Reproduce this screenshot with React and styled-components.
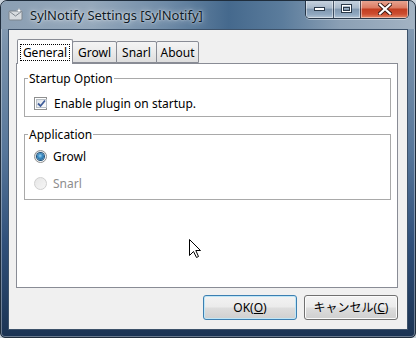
import React from 'react';
import styled, { createGlobalStyle } from 'styled-components';

const UI_FONT = `"Noto Sans", "Noto Sans CJK JP", sans-serif`;

const Global = createGlobalStyle`
  html, body { margin: 0; padding: 0; background: #c9d2db; overflow: hidden; }
  *, *::before, *::after { box-sizing: border-box; }
`;

const Window = styled.div`
  position: relative;
  width: 416px;
  height: 338px;
  display: flex;
  flex-direction: column;
  padding: 0 7px 7px 7px;
  border: 1px solid #1f2d3c;
  border-radius: 7px 7px 5px 5px;
  background: linear-gradient(180deg, #8ea3b8 0%, #7891ab 15%, #56769a 45%, #30507a 72%, #1b3353 100%);
  box-shadow: inset 0 0 0 1px rgba(255, 255, 255, 0.35);
  font-family: ${UI_FONT};
  font-size: 12px;
  color: #000;
  overflow: hidden;
`;

const TitleBar = styled.div`
  height: 28px;
  margin: 0 -7px;
  padding: 0 6px 0 7px;
  display: flex;
  align-items: flex-start;
  background: linear-gradient(90deg, #8b9fb3 0%, #95a8bb 22%, #6f8ba7 40%, #45698d 55%, #5b7c9c 68%, #8ba0b5 82%, #a3b3c3 100%);
  border-radius: 6px 6px 0 0;
`;

const AppIcon = styled.svg`
  flex: none;
  width: 16px;
  height: 16px;
  margin-top: 6px;
`;

const Title = styled.div`
  margin: 6px 0 0 6px;
  line-height: 17px;
  font-size: 13px;
  color: #0e1a26;
  text-shadow: 0 0 6px rgba(255, 255, 255, 0.85), 0 0 2px rgba(255, 255, 255, 0.7);
  white-space: nowrap;
`;

const Spacer = styled.div`
  flex: 1;
`;

const CaptionGroup = styled.div`
  display: flex;
  height: 19px;
  margin-top: -1px;
  border: 1px solid rgba(25, 38, 55, 0.85);
  border-top: none;
  border-radius: 0 0 5px 5px;
  overflow: hidden;
  box-shadow: 0 1px 0 rgba(255, 255, 255, 0.35);
`;

const CaptionButton = styled.div`
  width: ${(p) => p.$w}px;
  height: 100%;
  display: flex;
  align-items: center;
  justify-content: center;
  border-left: ${(p) => (p.$first ? 'none' : '1px solid rgba(25, 38, 55, 0.7)')};
  box-shadow: inset 0 0 0 1px rgba(255, 255, 255, 0.45);
  background: ${(p) =>
    p.$close
      ? 'linear-gradient(180deg, #e9a996 0%, #dc7d64 42%, #c33f22 52%, #cc4d30 78%, #e58a68 100%)'
      : 'linear-gradient(180deg, #c9d5e1 0%, #a9bacb 44%, #8198b0 52%, #90a8c0 80%, #b3c4d4 100%)'};
`;

const Client = styled.div`
  flex: 1;
  display: flex;
  flex-direction: column;
  padding: 9px 9px 9px 7px;
  background: #f0f0f0;
  border: 1px solid #3d526a;
`;

const TabStrip = styled.div`
  position: relative;
  z-index: 1;
  height: 24px;
  display: flex;
  align-items: flex-end;
  padding-left: 1px;
`;

const Tab = styled.div`
  position: relative;
  z-index: ${(p) => (p.$active ? 2 : 1)};
  width: ${(p) => p.$w}px;
  height: ${(p) => (p.$active ? 25 : 22)}px;
  margin-left: ${(p) => (p.$first ? 0 : -1)}px;
  margin-bottom: ${(p) => (p.$active ? -1 : 0)}px;
  display: flex;
  align-items: center;
  justify-content: center;
  border: 1px solid #898c95;
  border-bottom: ${(p) => (p.$active ? 'none' : '1px solid #898c95')};
  border-radius: 2px 2px 0 0;
  background: ${(p) => (p.$active ? '#ffffff' : 'linear-gradient(180deg, #f4f4f4 0%, #ebebeb 50%, #dedede 100%)')};
  line-height: 15px;
`;

const FocusLabel = styled.span`
  padding: 0 2px;
  border: 1px dotted #000;
  line-height: 15px;
`;

const Pane = styled.div`
  height: 225px;
  display: flex;
  flex-direction: column;
  padding: 7px 6px 0 7px;
  background: #ffffff;
  border: 1px solid #898c95;
`;

const Group = styled.fieldset`
  margin: ${(p) => p.$mt || 0}px 0 0 0;
  padding: 0 8px ${(p) => p.$pb}px 9px;
  border: 1px solid #a9a9a9;
  min-width: 0;
`;

const Legend = styled.legend`
  margin-left: -6px;
  padding: 0 1px;
  line-height: 15px;
  font-size: 12px;
`;

const Row = styled.label`
  display: flex;
  align-items: center;
  height: 20px;
  margin-top: ${(p) => p.$mt}px;
  gap: ${(p) => p.$gap}px;
  color: ${(p) => (p.$disabled ? '#8d8d8d' : '#000')};
  line-height: 15px;
`;

const CheckBox = styled.span`
  flex: none;
  width: 13px;
  height: 13px;
  border: 1px solid #8e8f8f;
  background: #fff;
  padding: 1px;
  display: flex;
`;

const CheckInner = styled.span`
  flex: 1;
  display: flex;
  align-items: center;
  justify-content: center;
  border: 1px solid #b8bfc6;
  background: linear-gradient(135deg, #dadfe4 0%, #f2f4f6 60%, #fbfbfb 100%);
`;

const Radio = styled.span`
  flex: none;
  width: 13px;
  height: 13px;
  border-radius: 50%;
  border: 1px solid ${(p) => (p.$disabled ? '#cfcfcf' : '#8e8f8f')};
  background: ${(p) =>
    p.$disabled
      ? 'linear-gradient(135deg, #e6e6e6, #f6f6f6)'
      : 'linear-gradient(135deg, #d4d8dc 0%, #f1f3f5 60%, #ffffff 100%)'};
  display: flex;
  align-items: center;
  justify-content: center;
`;

const RadioDot = styled.span`
  width: 7px;
  height: 7px;
  border-radius: 50%;
  background: radial-gradient(circle at 45% 40%, #9ad4f2 0%, #3b8cc4 40%, #16507e 100%);
  box-shadow: 0 0 0 1px #1c4f78;
`;

const ButtonRow = styled.div`
  display: flex;
  justify-content: flex-end;
  gap: 7px;
  margin-top: 7px;
`;

const Button = styled.div`
  width: 94px;
  height: 25px;
  display: flex;
  align-items: center;
  justify-content: center;
  border-radius: 3px;
  border: 1px solid ${(p) => (p.$default ? '#3c7fb1' : '#707070')};
  box-shadow: inset 0 0 0 1px ${(p) => (p.$default ? '#bfe6f7' : '#fbfbfb')};
  background: linear-gradient(180deg, #f3f3f3 0%, #ebebeb 48%, #dddddd 52%, #cfcfcf 100%);
  line-height: 15px;
  color: #000;
`;

const Mnemonic = styled.span`
  text-decoration: underline;
`;

const Cursor = styled.svg`
  position: absolute;
  left: 188px;
  top: 238px;
  width: 13px;
  height: 20px;
`;

export default function App() {
  return (
    <>
      <Global />
      <Window>
        <TitleBar>
          <AppIcon viewBox="0 0 16 16">
            <rect x="1" y="4" width="13" height="9" rx="1" fill="#d7dbdf" stroke="#7d858d" />
            <path d="M1.5 4.5 L7.5 9 L13.5 4.5" fill="none" stroke="#7d858d" />
            <path d="M11 1 L12 3 L14 3.5 L12 4 L11 6 L10 4 L8 3.5 L10 3 Z" fill="#ffffff" stroke="#9aa2aa" strokeWidth="0.5" />
          </AppIcon>
          <Title>SylNotify Settings [SylNotify]</Title>
          <Spacer />
          <CaptionGroup>
            <CaptionButton $w={27} $first>
              <svg width="12" height="6" viewBox="0 0 12 6">
                <rect x="0.5" y="1.5" width="10" height="3" fill="#fff" stroke="#2b3a4a" strokeWidth="1" />
              </svg>
            </CaptionButton>
            <CaptionButton $w={27}>
              <svg width="12" height="10" viewBox="0 0 12 10">
                <rect x="0.5" y="0.5" width="10" height="8" fill="none" stroke="#2b3a4a" />
                <rect x="1.5" y="1.5" width="8" height="6" fill="none" stroke="#fff" />
                <rect x="2.5" y="3.5" width="6" height="3" fill="none" stroke="#2b3a4a" />
              </svg>
            </CaptionButton>
            <CaptionButton $w={48} $close>
              <svg width="14" height="12" viewBox="0 0 14 12">
                <path d="M2 1.5 L12 10.5 M12 1.5 L2 10.5" stroke="#3a1a14" strokeWidth="4" strokeLinecap="square" />
                <path d="M2 1.5 L12 10.5 M12 1.5 L2 10.5" stroke="#ffffff" strokeWidth="2.2" strokeLinecap="square" />
              </svg>
            </CaptionButton>
          </CaptionGroup>
        </TitleBar>
        <Client>
          <TabStrip>
            <Tab $w={56} $active $first>
              <FocusLabel>General</FocusLabel>
            </Tab>
            <Tab $w={45}>Growl</Tab>
            <Tab $w={41}>Snarl</Tab>
            <Tab $w={43}>About</Tab>
          </TabStrip>
          <Pane>
            <Group $pb={3}>
              <Legend>Startup Option</Legend>
              <Row $mt={7} $gap={7}>
                <CheckBox>
                  <CheckInner>
                    <svg width="9" height="9" viewBox="0 0 9 9">
                      <path d="M1 4.5 L3.5 7 L8 1.5" fill="none" stroke="#3e5c99" strokeWidth="1.8" />
                    </svg>
                  </CheckInner>
                </CheckBox>
                Enable plugin on startup.
              </Row>
            </Group>
            <Group $mt={10} $pb={6}>
              <Legend>Application</Legend>
              <Row $mt={4} $gap={6}>
                <Radio>
                  <RadioDot />
                </Radio>
                Growl
              </Row>
              <Row $mt={7} $gap={6} $disabled>
                <Radio $disabled />
                Snarl
              </Row>
            </Group>
          </Pane>
          <ButtonRow>
            <Button $default>
              OK(<Mnemonic>O</Mnemonic>)
            </Button>
            <Button>
              キャンセル(<Mnemonic>C</Mnemonic>)
            </Button>
          </ButtonRow>
        </Client>
        <Cursor viewBox="0 0 13 20">
          <path d="M0.5 0.5 L0.5 16.5 L4.5 12.5 L7.5 18.5 L9.5 17.5 L6.8 11.5 L11.5 11.5 Z" fill="#ffffff" stroke="#000" strokeWidth="1" strokeLinejoin="miter" />
        </Cursor>
      </Window>
    </>
  );
}
